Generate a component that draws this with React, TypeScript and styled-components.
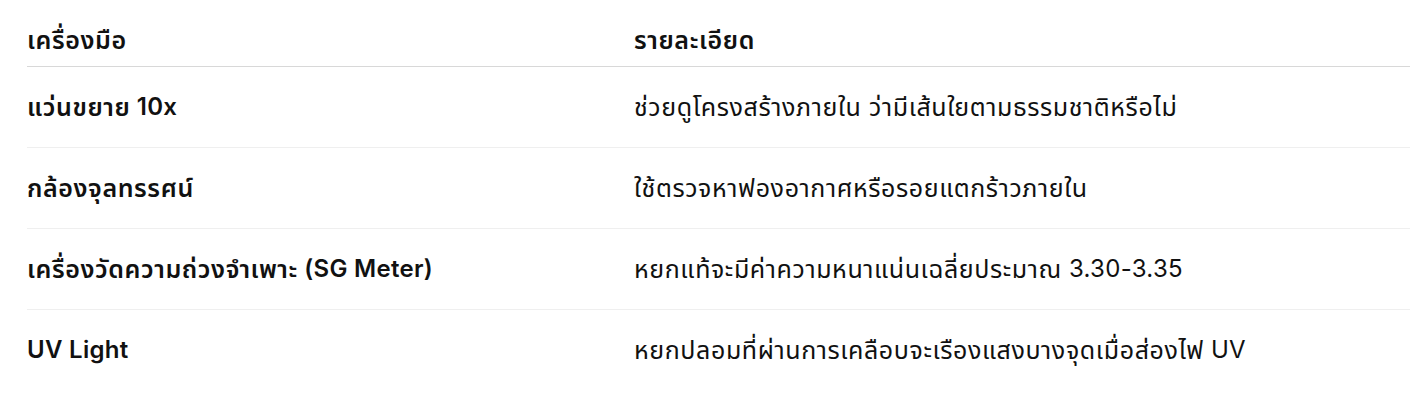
import React from "react";
import styled, { createGlobalStyle } from "styled-components";

const Global = createGlobalStyle`
  html, body { margin: 0; padding: 0; background: #fff; }
  body { font-family: "Inter", "Noto Sans Thai", "Noto Sans", sans-serif; color: #1d1d1f; }
`;

const Page = styled.div`
  padding: 13px 14px 0 27px;
`;

const Table = styled.div`
  display: grid;
  grid-template-columns: 607px 1fr;
`;

const Cell = styled.div<{ $head?: boolean; $bold?: boolean; $last?: boolean }>`
  display: flex;
  align-items: center;
  white-space: pre;
  font-size: 24px;
  letter-spacing: 0.3px;
  line-height: 32px;
  font-weight: ${(p) => (p.$bold ? 600 : 400)};
  height: ${(p) => (p.$head ? "53px" : "80px")};
  border-bottom: ${(p) =>
    p.$last ? "none" : p.$head ? "1.5px solid #d8d8d8" : "1px solid #efefef"};
  color: #111;
`;

const Thai = styled.span`
  font-size: 25px;
  letter-spacing: 0.6px;
`;

function Text({ children }: { children: string }) {
  const parts = children.split(/([\u0E00-\u0E7F]+(?:[ \u0E00-\u0E7F]*[\u0E00-\u0E7F])?)/).filter(Boolean);
  return (
    <>
      {parts.map((p, i) =>
        /[\u0E00-\u0E7F]/.test(p) ? <Thai key={i}>{p}</Thai> : <React.Fragment key={i}>{p}</React.Fragment>
      )}
    </>
  );
}

const rows = [
  ["แว่นขยาย 10x", "ช่วยดูโครงสร้างภายใน ว่ามีเส้นใยตามธรรมชาติหรือไม่"],
  ["กล้องจุลทรรศน์", "ใช้ตรวจหาฟองอากาศหรือรอยแตกร้าวภายใน"],
  ["เครื่องวัดความถ่วงจำเพาะ (SG Meter)", "หยกแท้จะมีค่าความหนาแน่นเฉลี่ยประมาณ 3.30-3.35"],
  ["UV Light", "หยกปลอมที่ผ่านการเคลือบจะเรืองแสงบางจุดเมื่อส่องไฟ UV"],
];

export default function App() {
  return (
    <Page>
      <Global />
      <Table>
        <Cell $head $bold><Text>เครื่องมือ</Text></Cell>
        <Cell $head $bold><Text>รายละเอียด</Text></Cell>
        {rows.map((r, i) => (
          <React.Fragment key={i}>
            <Cell $bold $last={i === rows.length - 1}><Text>{r[0]}</Text></Cell>
            <Cell $last={i === rows.length - 1}><Text>{r[1]}</Text></Cell>
          </React.Fragment>
        ))}
      </Table>
    </Page>
  );
}
